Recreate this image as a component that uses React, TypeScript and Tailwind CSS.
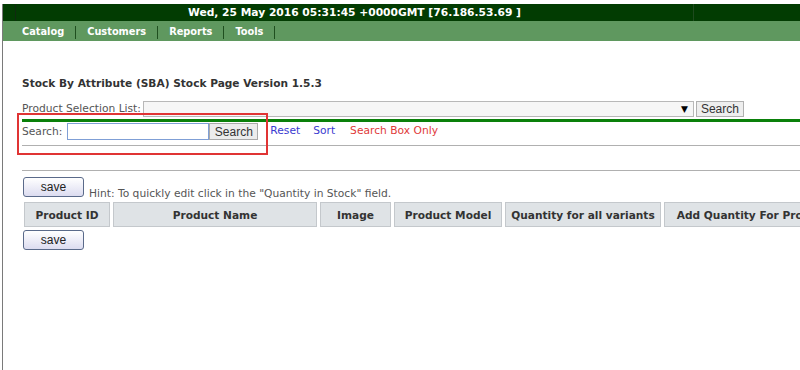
import React from "react";

const saveBtn =
  "w-[61px] h-[20px] rounded-[3px] border border-[#5a6a8a] bg-[linear-gradient(#ffffff,#dcdcf0)] text-[12px] text-[#222] leading-[16px] font-['Liberation_Sans',sans-serif]";

function HeaderCell({ w, children }: { w: number | string; children: React.ReactNode }) {
  return (
    <div
      className="h-[25px] shrink-0 flex items-center justify-center pt-[2px] bg-[#dfe3e6] border border-[#c4c8cc] text-[10.6px] font-bold text-[#333]"
      style={{ width: w }}
    >
      <span className="whitespace-nowrap">{children}</span>
    </div>
  );
}

function Sep() {
  return <span className="mx-[11px] w-px h-[13px] bg-[#1f4f1f]" />;
}

export default function App() {
  return (
    <div className="w-[800px] h-[370px] bg-white overflow-hidden font-['DejaVu_Sans',Verdana,sans-serif]">
      <div className="mt-[4px] ml-[2px] border-l border-[#7a7a7a] h-[366px] relative">
        {/* dark top bar */}
        <div className="h-[17px] bg-[#023c02] flex text-white font-bold text-[10.7px]">
          <div className="w-[13px] border-r border-[#0f2a0f]" />
          <div className="w-[678px] border-r border-[#1e4a1e] flex items-center justify-center pt-[1px]">
            <span className="whitespace-nowrap">Wed, 25 May 2016 05:31:45 +0000GMT [76.186.53.69 ]</span>
          </div>
          <div className="flex-1" />
        </div>
        {/* menu bar */}
        <div className="h-[20px] bg-[#5f985f] flex items-center pt-[2px] pl-[19px] text-white font-bold text-[9.8px]">
          <span>Catalog</span>
          <Sep />
          <span>Customers</span>
          <Sep />
          <span>Reports</span>
          <Sep />
          <span>Tools</span>
          <Sep />
        </div>

        <div className="pl-[19px]">
          <div className="mt-[35px] text-[10.6px] font-bold text-[#333] leading-[14px]">
            Stock By Attribute (SBA) Stock Page Version 1.5.3
          </div>

          {/* product selection */}
          <div className="mt-[11px] flex items-center h-[16px]">
            <span className="text-[10.7px] text-[#555] leading-[14px] whitespace-nowrap">Product Selection List:</span>
            <div className="ml-[2px] w-[551px] h-[16px] border border-[#b8b8b8] bg-[#f6f6f6] flex items-center justify-end pr-[5px]">
              <span className="text-[9px] text-black leading-none">▼</span>
            </div>
            <button className="ml-[2px] w-[48px] h-[16px] border border-[#b0b0b0] bg-[#eeeeee] text-[12px] text-[#333] leading-[14px] font-['Liberation_Sans',sans-serif]">
              Search
            </button>
          </div>

          {/* green line */}
          <div className="mt-[2px] h-[3px] bg-[#0a800a]" />

          {/* search row */}
          <div className="mt-[1px] flex items-center h-[17px]">
            <span className="text-[10.7px] text-[#555] leading-[14px]">Search:</span>
            <div className="ml-[5px] w-[142px] h-[17px] border border-[#7f9fd6] bg-white" />
            <button className="w-[49px] h-[17px] border border-[#aaaaaa] bg-[#ececec] text-[12px] text-[#333] leading-[14px] font-['Liberation_Sans',sans-serif]">
              Search
            </button>
            <span className="ml-[12px] text-[10.7px] text-[#3a3ad0]">Reset</span>
            <span className="ml-[13px] text-[10.7px] text-[#3a3ad0]">Sort</span>
            <span className="ml-[15px] text-[10.7px] text-[#e03a3a]">Search Box Only</span>
          </div>

          <div className="mt-[5px] h-px bg-[#b0b0b0]" />
          <div className="mt-[24px] h-px bg-[#b0b0b0]" />

          {/* save + hint */}
          <div className="mt-[6px] flex items-end">
            <button className={"ml-[1px] " + saveBtn}>save</button>
            <span className="ml-[5px] text-[10.7px] text-[#555] leading-[13px] mb-[-3px]">
              Hint: To quickly edit click in the "Quantity in Stock" field.
            </span>
          </div>

          {/* header row */}
          <div className="mt-[5px] ml-[2px] flex gap-[3px]">
            <HeaderCell w={86}>Product ID</HeaderCell>
            <HeaderCell w={204}>Product Name</HeaderCell>
            <HeaderCell w={71}>Image</HeaderCell>
            <HeaderCell w={108}>Product Model</HeaderCell>
            <HeaderCell w={156}>Quantity for all variants</HeaderCell>
            <HeaderCell w={178}>Add Quantity For Product</HeaderCell>
          </div>

          <div className="mt-[3px] flex">
            <button className={"ml-[1px] " + saveBtn}>save</button>
          </div>
        </div>

        {/* red annotation box */}
        <div className="absolute left-[14px] top-[109px] w-[251px] h-[42px] border-2 border-[#e03434] pointer-events-none" />
      </div>
    </div>
  );
}
